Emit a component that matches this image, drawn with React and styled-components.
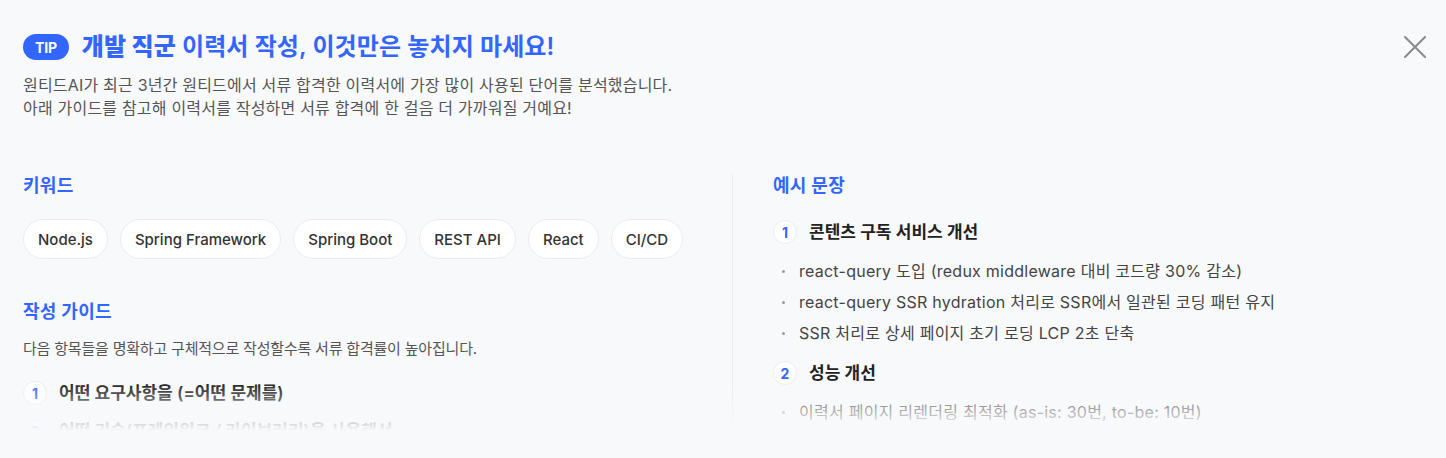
import styled, { createGlobalStyle } from 'styled-components';

const GlobalStyle = createGlobalStyle`
	* { box-sizing: border-box; }
	body {
		margin: 0;
		background: #f8f9fb;
		font-family: Inter, "Noto Sans CJK KR", sans-serif;
		-webkit-font-smoothing: antialiased;
	}
	ul, ol { margin: 0; padding: 0; list-style: none; }
	h2, h3, p { margin: 0; }
`

const BG = '#f8f9fb';
const BLUE = '#3366ff';

const Page = styled.div`
	position: relative;
	height: 458px;
	padding: 32px 23px 0;
	background: ${BG};
	overflow: hidden;
`

const Header = styled.div`
	display: flex;
	align-items: center;
	gap: 13px;
	height: 30px;
`

const Badge = styled.span`
	display: inline-flex;
	align-items: center;
	justify-content: center;
	height: 26px;
	padding: 0 12px;
	border-radius: 13px;
	background: ${BLUE};
	color: #fff;
	font-size: 14px;
	font-weight: 700;
	letter-spacing: -0.2px;
`

const Title = styled.h1`
	margin: 0;
	font-size: 24px;
	line-height: 30px;
	font-weight: 600;
	color: ${BLUE};
	letter-spacing: 0.1px;
	b { font-weight: 800; }
`

const CloseBtn = styled.button`
	position: absolute;
	top: 34px;
	right: 18px;
	width: 26px;
	height: 26px;
	padding: 0;
	border: 0;
	background: none;
	cursor: pointer;
`

const Desc = styled.p`
	margin-top: 12px;
	font-size: 16px;
	line-height: 23px;
	color: #555;
	letter-spacing: 0.2px;
`

const Body = styled.div`
	position: relative;
	display: grid;
	grid-template-columns: 709px 1fr;
	margin-top: 54px;
	height: 265px;
	overflow: hidden;
	&::after {
		content: '';
		position: absolute;
		left: 0;
		right: 0;
		bottom: 0;
		height: 56px;
		background: linear-gradient(rgba(248, 249, 251, 0), ${BG} 85%);
	}
`

const Column = styled.section`
	display: flex;
	flex-direction: column;
	${p => p.$divided && `
		border-left: 1px solid #ececef;
		padding-left: 40px;
	`}
`

const Heading = styled.h2`
	font-size: 18px;
	line-height: 24px;
	font-weight: 700;
	color: ${BLUE};
	letter-spacing: 0.3px;
	margin-top: ${p => p.$top || 0}px;
`

const Chips = styled.div`
	display: flex;
	flex-wrap: wrap;
	gap: 12px;
	margin-top: 21px;
`

const Chip = styled.span`
	display: inline-flex;
	align-items: center;
	height: 40px;
	padding: 0 14px;
	border: 1px solid #ececef;
	border-radius: 20px;
	background: #fff;
	font-size: 15px;
	font-weight: 500;
	color: #333;
`

const SubDesc = styled.p`
	margin-top: 14px;
	font-size: 15px;
	line-height: 22px;
	color: #555;
	letter-spacing: -0.2px;
`

const Steps = styled.ol`
	display: flex;
	flex-direction: column;
	gap: ${p => p.$gap}px;
	margin-top: ${p => p.$top}px;
`

const Step = styled.li`
	display: flex;
	flex-direction: column;
	gap: 15px;
`

const StepHead = styled.div`
	display: flex;
	align-items: center;
	gap: 12px;
	height: 24px;
`

const Num = styled.span`
	display: inline-flex;
	align-items: center;
	justify-content: center;
	flex: none;
	width: 24px;
	height: 24px;
	border: 1px solid #ececef;
	border-radius: 50%;
	background: #fff;
	color: ${BLUE};
	font-size: 14px;
	font-weight: 700;
`

const StepTitle = styled.h3`
	font-size: 17px;
	line-height: 24px;
	font-weight: 600;
	color: #222;
	letter-spacing: 0;
`

const Bullets = styled.ul`
	display: flex;
	flex-direction: column;
	gap: 7px;
`

const Bullet = styled.li`
	position: relative;
	padding-left: 26px;
	font-size: 16px;
	line-height: 24px;
	color: #444;
	letter-spacing: 0.25px;
	&::before {
		content: '';
		position: absolute;
		left: 9px;
		top: 11px;
		width: 3px;
		height: 3px;
		border-radius: 50%;
		background: #999;
	}
`

const keywords = ['Node.js', 'Spring Framework', 'Spring Boot', 'REST API', 'React', 'CI/CD'];

const guides = [
	'어떤 요구사항을 (=어떤 문제를)',
	'어떤 기술(프레임워크 / 라이브러리)을 사용해서',
	'어떻게 해결했고 어떤 결과를 얻었는지',
];

const examples = [
	{
		title: '콘텐츠 구독 서비스 개선',
		items: [
			'react-query 도입 (redux middleware 대비 코드량 30% 감소)',
			'react-query SSR hydration 처리로 SSR에서 일관된 코딩 패턴 유지',
			'SSR 처리로 상세 페이지 초기 로딩 LCP 2초 단축',
		],
	},
	{
		title: '성능 개선',
		items: [
			'이력서 페이지 리렌더링 최적화 (as-is: 30번, to-be: 10번)',
			'번들 사이즈 최적화로 초기 로딩 속도 개선',
		],
	},
];

const App = () => {
	return (
		<>
			<GlobalStyle />
			<Page>
				<Header>
					<Badge>TIP</Badge>
					<Title><b>개발 직군</b> 이력서 작성, 이것만은 놓치지 마세요!</Title>
				</Header>
				<CloseBtn aria-label="닫기">
					<svg width="26" height="26" viewBox="0 0 26 26" fill="none">
						<path d="M3 3L23 23M23 3L3 23" stroke="#8a8a8a" strokeWidth="2" strokeLinecap="round" />
					</svg>
				</CloseBtn>
				<Desc>
					원티드AI가 최근 3년간 원티드에서 서류 합격한 이력서에 가장 많이 사용된 단어를 분석했습니다.
					<br />
					아래 가이드를 참고해 이력서를 작성하면 서류 합격에 한 걸음 더 가까워질 거예요!
				</Desc>

				<Body>
					<Column>
						<Heading>키워드</Heading>
						<Chips>
							{keywords.map(k => <Chip key={k}>{k}</Chip>)}
						</Chips>
						<Heading $top={41}>작성 가이드</Heading>
						<SubDesc>다음 항목들을 명확하고 구체적으로 작성할수록 서류 합격률이 높아집니다.</SubDesc>
						<Steps $top={21} $gap={14}>
							{guides.map((g, i) => (
								<Step key={g}>
									<StepHead>
										<Num>{i + 1}</Num>
										<StepTitle>{g}</StepTitle>
									</StepHead>
								</Step>
							))}
						</Steps>
					</Column>

					<Column $divided>
						<Heading>예시 문장</Heading>
						<Steps $top={22} $gap={16}>
							{examples.map((ex, i) => (
								<Step key={ex.title}>
									<StepHead>
										<Num>{i + 1}</Num>
										<StepTitle>{ex.title}</StepTitle>
									</StepHead>
									<Bullets>
										{ex.items.map(t => <Bullet key={t}>{t}</Bullet>)}
									</Bullets>
								</Step>
							))}
						</Steps>
					</Column>
				</Body>
			</Page>
		</>
	)
}

export default App;
